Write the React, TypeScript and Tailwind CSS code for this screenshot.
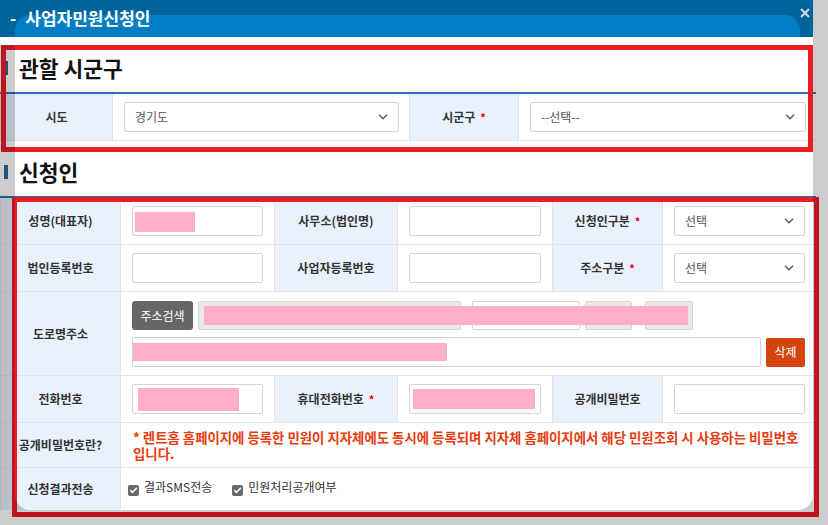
import { Check, ChevronDown } from 'lucide-react';
import type { ReactNode } from 'react';

function Label({ children, req = false, className = '' }: { children: ReactNode; req?: boolean; className?: string }) {
  return (
    <div className={`flex items-center justify-center bg-[#e9f1fc] border-x border-[#e3e3e3] text-[12px] font-semibold text-[#333] ${className}`}>
      <span>{children}</span>
      {req && <span className="ml-[5px] text-[11px] text-[#e60012]">*</span>}
    </div>
  );
}

function Box({ children, className = '' }: { children?: ReactNode; className?: string }) {
  return (
    <div className={`relative h-[30px] rounded-[2px] border border-[#d4d4d4] bg-white ${className}`}>{children}</div>
  );
}

function Select({ text }: { text: string }) {
  return (
    <Box className="flex w-full items-center justify-between pl-[10px] pr-[8px] text-[12px] text-[#555]">
      <span>{text}</span>
      <ChevronDown className="h-[14px] w-[14px] text-[#666]" strokeWidth={3} />
    </Box>
  );
}

function Redact({ className }: { className: string }) {
  return <div className={`absolute bg-[#ffaec9] ${className}`} />;
}

function SectionTitle({ title }: { title: string }) {
  return (
    <div className="flex h-[55px] items-center pt-[6px]">
      <span className="ml-[4px] h-[14px] w-[4px] bg-[#2d63a8]" />
      <h2 className="ml-[11px] text-[21.5px] font-bold leading-none text-[#111]">{title}</h2>
    </div>
  );
}

function CheckItem({ label }: { label: string }) {
  return (
    <div className="flex items-start gap-[5px]">
      <span className="mt-[6px] flex h-[11px] w-[11px] items-center justify-center rounded-[2px] bg-[#6a6a6a]">
        <Check className="h-[9px] w-[9px] text-white" strokeWidth={4} />
      </span>
      <span className="text-[12px] leading-[16px] text-[#333]">{label}</span>
    </div>
  );
}

export default function App() {
  const row = 'grid grid-cols-[121px_153px_124px_154px_111px_153px] border-b border-[#e3e3e3]';
  const cell = 'flex items-center px-[11px]';

  return (
    <div className="relative h-[525px] w-[828px] overflow-hidden bg-white font-['Noto_Sans_CJK_KR','Noto_Sans',sans-serif]">
      <div className="w-[816px]">
        {/* window header */}
        <div className="relative z-20 h-[37px] w-[813px] bg-[#00649c] pl-[15px] pr-[13px] pt-[15px]">
          <div className="h-[22px] rounded-t-[15px] bg-[#007dc3]" />
          <div className="absolute left-[10px] top-[7px] flex items-center text-[17px] font-bold leading-[22px] text-white">
            <span>-</span>
            <span className="ml-[9px]">사업자민원신청인</span>
          </div>
          <svg className="absolute right-[3px] top-[8px]" width="10" height="10" viewBox="0 0 10 10">
            <path d="M1 1L9 9M9 1L1 9" stroke="#d3dae1" strokeWidth="2" />
          </svg>
        </div>

        {/* 관할 시군구 */}
        <SectionTitle title="관할 시군구" />
        <div className="grid grid-cols-[113px_296px_110px_297px] border-b border-t-2 border-b-[#e3e3e3] border-t-[#2c6db5]">
          <Label className="h-[46px]">시도</Label>
          <div className="flex items-center pl-[11px] pr-[10px]">
            <Select text="경기도" />
          </div>
          <Label req>시군구</Label>
          <div className="flex items-center pl-[11px] pr-[10px]">
            <Select text="--선택--" />
          </div>
        </div>

        {/* 신청인 */}
        <SectionTitle title="신청인" />
        <div className="border-t-2 border-[#2c6db5]">
          <div className={`${row} h-[47px]`}>
            <Label>성명(대표자)</Label>
            <div className={cell}>
              <Box className="w-full">
                <Redact className="left-[2px] top-[5px] h-[20px] w-[60px]" />
              </Box>
            </div>
            <Label>사무소(법인명)</Label>
            <div className={cell}>
              <Box className="w-full" />
            </div>
            <Label req>신청인구분</Label>
            <div className={cell}>
              <Select text="선택" />
            </div>
          </div>

          <div className={`${row} h-[47px]`}>
            <Label>법인등록번호</Label>
            <div className={cell}>
              <Box className="w-full" />
            </div>
            <Label>사업자등록번호</Label>
            <div className={cell}>
              <Box className="w-full" />
            </div>
            <Label req>주소구분</Label>
            <div className={cell}>
              <Select text="선택" />
            </div>
          </div>

          <div className={`${row} h-[84px]`}>
            <Label>도로명주소</Label>
            <div className="col-span-5 flex flex-col gap-[7px] px-[11px] pt-[9px]">
              <div className="relative flex h-[29px] items-center">
                <button className="h-[29px] w-[61px] rounded-[3px] bg-[#666] text-[12px] text-white">주소검색</button>
                <div className="ml-[5px] h-[29px] w-[263px] rounded-[2px] border border-[#d4d4d4] bg-[#e9e9e9]" />
                <div className="ml-[11px] h-[29px] w-[108px] rounded-[2px] border border-[#d4d4d4] bg-white" />
                <div className="ml-[5px] h-[29px] w-[47px] rounded-[2px] border border-[#d4d4d4] bg-[#e9e9e9]" />
                <div className="ml-[13px] h-[29px] w-[48px] rounded-[2px] border border-[#d4d4d4] bg-[#e9e9e9]" />
                <Redact className="left-[72px] top-[5px] h-[19px] w-[484px]" />
              </div>
              <div className="flex items-center gap-[5px]">
                <Box className="w-[630px]">
                  <Redact className="left-0 top-[5px] h-[18px] w-[314px]" />
                </Box>
                <button className="h-[29px] w-[39px] rounded-[2px] bg-[#d3440f] text-[12px] text-white">삭제</button>
              </div>
            </div>
          </div>

          <div className={`${row} h-[47px]`}>
            <Label>전화번호</Label>
            <div className={cell}>
              <Box className="w-full">
                <Redact className="left-[5px] top-[3px] h-[23px] w-[101px]" />
              </Box>
            </div>
            <Label req>휴대전화번호</Label>
            <div className={cell}>
              <Box className="w-full">
                <Redact className="left-[3px] top-[4px] h-[20px] w-[122px]" />
              </Box>
            </div>
            <Label>공개비밀번호</Label>
            <div className={cell}>
              <Box className="w-full" />
            </div>
          </div>

          <div className={`${row} h-[45px]`}>
            <Label>공개비밀번호란?</Label>
            <div className="col-span-5 flex items-center pl-[12px] text-[13.4px] font-semibold leading-[16px] text-[#e63c0e]">
              <p>
                * 렌트홈 홈페이지에 등록한 민원이 지자체에도 동시에 등록되며 지자체 홈페이지에서 해당 민원조회 시 사용하는 비밀번호
                <br />
                입니다.
              </p>
            </div>
          </div>

          <div className="grid h-[42px] grid-cols-[121px_695px]">
            <Label>신청결과전송</Label>
            <div className="flex items-center gap-[20px] pb-[4px] pl-[7px]">
              <CheckItem label="결과SMS전송" />
              <CheckItem label="민원처리공개여부" />
            </div>
          </div>
        </div>
      </div>

      {/* annotation boxes */}
      <div className="absolute left-[1px] top-[45px] z-[5] h-[107px] w-[812px] border-[5px] border-[#ed1c24]" />
      <div className="absolute left-[12px] top-[197px] z-[5] h-[320px] w-[807px] border-[5px] border-[#ed1c24]" />

      {/* modal mask */}
      <div className="pointer-events-none absolute left-[15px] top-[37px] z-10 h-[473px] w-[798px] rounded-b-[15px] shadow-[0_0_0_1000px_rgba(0,0,0,0.2)]" />
      <div className="absolute left-0 top-[37px] z-[11] h-[8px] w-[15px] bg-white" />
    </div>
  );
}
